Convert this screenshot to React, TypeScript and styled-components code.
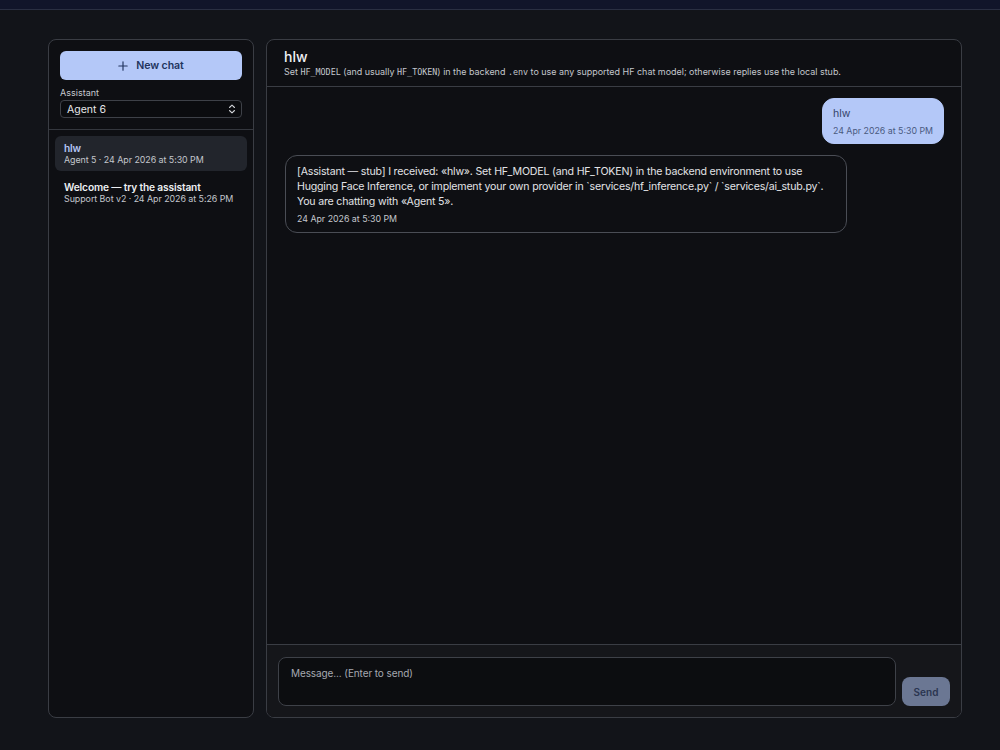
import React from "react";
import styled, { createGlobalStyle } from "styled-components";

const Global = createGlobalStyle`
  * { box-sizing: border-box; }
  html, body { margin: 0; padding: 0; background: #121419; }
  body { font-family: Inter, "Noto Sans", sans-serif; color: #e6e7ea; }
`;

const Page = styled.div`
  width: 1000px;
  height: 750px;
  display: flex;
  flex-direction: column;
  background: #121419;
`;

const TopBar = styled.div`
  height: 10px;
  background: #11152a;
  border-bottom: 1px solid #2a2f42;
  flex: none;
`;

const Body = styled.div`
  flex: 1;
  display: flex;
  gap: 12px;
  padding: 29px 38px 32px 48px;
  min-height: 0;
`;

const Panel = styled.div`
  background: #0e0f13;
  border: 1px solid #3a3d44;
  border-radius: 8px;
  display: flex;
  flex-direction: column;
  overflow: hidden;
`;

const Sidebar = styled(Panel)`
  width: 206px;
  flex: none;
`;

const SideTop = styled.div`
  padding: 11px 11px 11px 11px;
  border-bottom: 1px solid #34373e;
  display: flex;
  flex-direction: column;
`;

const NewChat = styled.button`
  height: 29px;
  border: none;
  border-radius: 6px;
  background: #b4c8f8;
  color: #22345e;
  font-family: Inter, sans-serif;
  font-size: 10.6px;
  font-weight: 600;
  letter-spacing: -0.1px;
  display: flex;
  align-items: center;
  justify-content: center;
  gap: 8px;
  svg { display: block; }
`;

const Label = styled.div`
  font-size: 9px;
  color: #c6c9cf;
  margin-top: 7px;
  line-height: 12px;
`;

const Select = styled.div`
  margin-top: 1px;
  height: 18px;
  border: 1px solid #3e4148;
  border-radius: 4px;
  background: #0b0c0f;
  display: flex;
  align-items: center;
  justify-content: space-between;
  padding: 0 5px 0 6px;
  font-size: 10.5px;
  color: #e6e7ea;
`;

const List = styled.div`
  padding: 6px 6px;
  display: flex;
  flex-direction: column;
  gap: 4px;
`;

const Item = styled.div<{ $active?: boolean }>`
  border-radius: 6px;
  background: ${(p) => (p.$active ? "#22252c" : "transparent")};
  padding: 6px 9px 6px;
  display: flex;
  flex-direction: column;
`;

const ItemTitle = styled.div<{ $active?: boolean }>`
  font-size: 10.2px;
  line-height: 12px;
  font-weight: 600;
  letter-spacing: -0.15px;
  color: ${(p) => (p.$active ? "#b4c6f5" : "#eceef1")};
`;

const ItemSub = styled.div`
  font-size: 8.9px;
  line-height: 11px;
  letter-spacing: -0.05px;
  color: #c4c7cd;
  white-space: nowrap;
`;

const Main = styled(Panel)`
  flex: 1;
`;

const Header = styled.div`
  padding: 8px 17px 8px;
  border-bottom: 1px solid #3a3d44;
`;

const Title = styled.div`
  font-size: 14px;
  line-height: 18px;
  font-weight: 500;
  color: #f0f1f3;
`;

const Sub = styled.div`
  font-size: 8.95px;
  line-height: 11px;
  color: #c4c7cd;
  white-space: nowrap;
  code {
    font-family: "DejaVu Sans Mono", "Liberation Mono", monospace;
    font-size: 8.4px;
  }
`;

const Messages = styled.div`
  flex: 1;
  padding: 11px 17px 11px 18px;
  display: flex;
  flex-direction: column;
  gap: 11px;
`;

const Bubble = styled.div<{ $user?: boolean }>`
  max-width: 562px;
  align-self: ${(p) => (p.$user ? "flex-end" : "flex-start")};
  background: ${(p) => (p.$user ? "#b4c8f8" : "transparent")};
  border: 1px solid ${(p) => (p.$user ? "#b4c8f8" : "#4a4d55")};
  color: ${(p) => (p.$user ? "#34446a" : "#e2e3e6")};
  border-radius: 12px;
  padding: ${(p) => (p.$user ? "7px 10px 6px" : "8px 18px 7px 11px")};
  font-size: 10.6px;
  line-height: 15px;
  letter-spacing: ${(p) => (p.$user ? "0" : "-0.19px")};
`;

const Stamp = styled.div<{ $user?: boolean }>`
  margin-top: 4px;
  font-size: 8.8px;
  line-height: 12px;
  letter-spacing: 0;
  color: ${(p) => (p.$user ? "#4a5a80" : "#c4c7cd")};
`;

const Footer = styled.div`
  border-top: 1px solid #3a3d44;
  background: #15161a;
  padding: 12px 11px 11px;
  display: flex;
  align-items: flex-end;
  gap: 6px;
`;

const Input = styled.div`
  flex: 1;
  height: 49px;
  border: 1px solid #3e4148;
  border-radius: 8px;
  background: #0c0d10;
  padding: 9px 12px;
  font-size: 10px;
  letter-spacing: -0.1px;
  color: #a6a9b0;
`;

const Send = styled.button`
  width: 48px;
  height: 29px;
  border: none;
  border-radius: 8px;
  background: #6b7793;
  color: #2a3550;
  font-family: Inter, sans-serif;
  font-size: 10px;
  font-weight: 600;
`;

export default function App() {
  return (
    <Page>
      <Global />
      <TopBar />
      <Body>
        <Sidebar>
          <SideTop>
            <NewChat>
              <svg width="10" height="10" viewBox="0 0 12 12">
                <path d="M6 1v10M1 6h10" stroke="#22345e" strokeWidth="1.4" strokeLinecap="round" />
              </svg>
              New chat
            </NewChat>
            <Label>Assistant</Label>
            <Select>
              <span>Agent 6</span>
              <svg width="8" height="10" viewBox="0 0 8 10">
                <path d="M1.5 3.5L4 1.2l2.5 2.3M1.5 6.5L4 8.8l2.5-2.3" stroke="#d0d2d6" strokeWidth="1.1" fill="none" strokeLinecap="round" strokeLinejoin="round" />
              </svg>
            </Select>
          </SideTop>
          <List>
            <Item $active>
              <ItemTitle $active>hlw</ItemTitle>
              <ItemSub>Agent 5 · 24 Apr 2026 at 5:30 PM</ItemSub>
            </Item>
            <Item>
              <ItemTitle>Welcome — try the assistant</ItemTitle>
              <ItemSub>Support Bot v2 · 24 Apr 2026 at 5:26 PM</ItemSub>
            </Item>
          </List>
        </Sidebar>
        <Main>
          <Header>
            <Title>hlw</Title>
            <Sub>
              Set <code>HF_MODEL</code> (and usually <code>HF_TOKEN</code>) in the backend <code>.env</code> to use any supported HF chat model; otherwise replies use the local stub.
            </Sub>
          </Header>
          <Messages>
            <Bubble $user>
              hlw
              <Stamp $user>24 Apr 2026 at 5:30 PM</Stamp>
            </Bubble>
            <Bubble>
              [Assistant — stub] I received: «hlw». Set HF_MODEL (and HF_TOKEN) in the backend environment to use Hugging Face Inference, or implement your own provider in `services/hf_inference.py` / `services/ai_stub.py`. You are chatting with «Agent 5».
              <Stamp>24 Apr 2026 at 5:30 PM</Stamp>
            </Bubble>
          </Messages>
          <Footer>
            <Input>Message... (Enter to send)</Input>
            <Send>Send</Send>
          </Footer>
        </Main>
      </Body>
    </Page>
  );
}
